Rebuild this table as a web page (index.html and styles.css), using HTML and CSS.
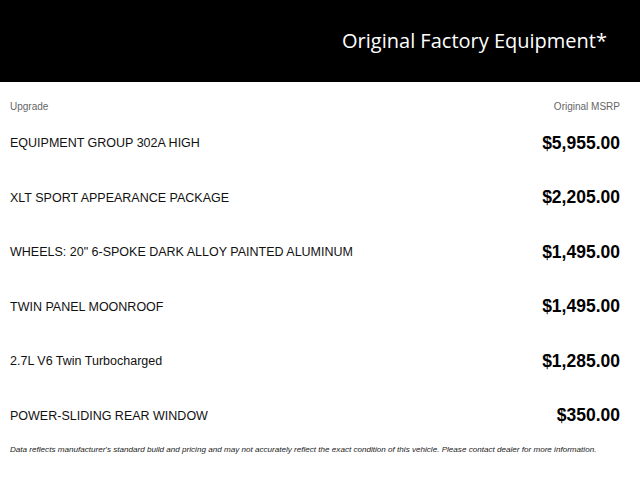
FILE: index.html
```html
<!DOCTYPE html>
<html>
<head>
<meta charset="utf-8">
<link rel="stylesheet" href="styles.css">
</head>
<body>
<header class="hero">
  <h1 class="title">Original Factory Equipment*</h1>
</header>
<main class="content">
  <div class="labels">
    <span>Upgrade</span>
    <span>Original MSRP</span>
  </div>
  <div class="row"><span class="name">EQUIPMENT GROUP 302A HIGH</span><span class="price">$5,955.00</span></div>
  <div class="row"><span class="name">XLT SPORT APPEARANCE PACKAGE</span><span class="price">$2,205.00</span></div>
  <div class="row"><span class="name">WHEELS: 20" 6-SPOKE DARK ALLOY PAINTED ALUMINUM</span><span class="price">$1,495.00</span></div>
  <div class="row"><span class="name">TWIN PANEL MOONROOF</span><span class="price">$1,495.00</span></div>
  <div class="row"><span class="name">2.7L V6 Twin Turbocharged</span><span class="price">$1,285.00</span></div>
  <div class="row"><span class="name">POWER-SLIDING REAR WINDOW</span><span class="price">$350.00</span></div>
  <p class="note">Data reflects manufacturer's standard build and pricing and may not accurately reflect the exact condition of this vehicle. Please contact dealer for more information.</p>
</main>
</body>
</html>
```

FILE: styles.css
```css
html, body {
  margin: 0;
  padding: 0;
  background: #fff;
}
body {
  font-family: "Liberation Sans", Arial, sans-serif;
  color: #111;
}
.hero {
  background: #000;
  height: 82px;
  display: flex;
  align-items: center;
  justify-content: flex-end;
  padding-right: 33px;
}
.title {
  margin: 0;
  color: #fff;
  font-family: "Open Sans", sans-serif;
  font-weight: 400;
  font-size: 20px;
  line-height: 24px;
}
.content {
  padding: 0 20px 0 10px;
}
.labels {
  display: flex;
  justify-content: space-between;
  padding-top: 17px;
  height: 17px;
  line-height: 16px;
  font-size: 10px;
  color: #666;
}
.row {
  display: flex;
  justify-content: space-between;
  align-items: center;
  height: 54.5px;
}
.name {
  font-size: 12.5px;
  color: #111;
}
.price {
  font-size: 17.5px;
  font-weight: 700;
  color: #000;
}
.note {
  margin: 1px 0 0;
  font-size: 8.1px;
  line-height: 12px;
  font-style: italic;
  color: #222;
}
```
